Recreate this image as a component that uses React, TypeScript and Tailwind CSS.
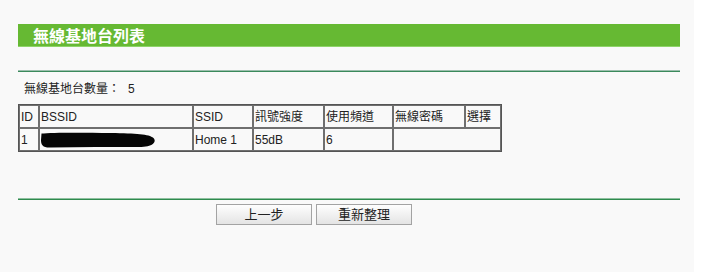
import React from "react";

const font = { fontFamily: '"Liberation Sans", Arial, "Noto Sans CJK TC", sans-serif' };

function Blob() {
  return (
    <svg width="116" height="16" viewBox="0 0 116 16" className="block">
      <path
        d="M0.5 1.5 C 10 0.5, 40 0.5, 70 1 C 95 1.5, 108 2, 112.5 6 C 116 10, 112 15, 98 15 C 70 15, 40 14.5, 10 15.5 C 2 16, 0 13, 0 8 Z"
        fill="#050505"
      />
    </svg>
  );
}

export default function App() {
  const th = "border border-[#6f6f6f] text-left font-normal pl-[1px] h-[23px] align-middle";
  const td = "border border-[#6f6f6f] pl-[1px] h-[23px] align-middle";
  return (
    <div className="w-[720px] h-[272px] bg-white" style={font}>
      <div className="w-[694px] h-[272px] bg-[#f9f9f9] pl-[18px] pr-[14px] pt-[24px] text-[12px] text-[#222]">
        <div className="h-[23px] bg-[#66b933] border-b border-[#8ed46a] flex items-center pl-[15px]">
          <span className="text-white font-bold text-[16px] leading-none" style={{ fontFamily: '"Noto Sans CJK TC", serif' }}>
            無線基地台列表
          </span>
        </div>
        <div className="mt-[23px] h-[1px] bg-[#9dbfae]" />
        <div className="h-[1px] bg-[#3b8a5c]" />
        <div className="mt-[9px] pl-[6px] leading-[16px] flex">
          <span>無線基地台數量：</span>
          <span className="ml-[8px]">5</span>
        </div>
        <table className="mt-[7px] border-separate border-spacing-0 border border-[#555] table-fixed w-[484px] leading-[14px]">
          <colgroup>
            <col className="w-[20px]" />
            <col className="w-[154px]" />
            <col className="w-[60px]" />
            <col className="w-[71px]" />
            <col className="w-[69px]" />
            <col className="w-[72px]" />
            <col className="w-[36px]" />
          </colgroup>
          <thead>
            <tr>
              <th className={th}>ID</th>
              <th className={th}>BSSID</th>
              <th className={th}>SSID</th>
              <th className={th}>訊號強度</th>
              <th className={th}>使用頻道</th>
              <th className={th}>無線密碼</th>
              <th className={th}>選擇</th>
            </tr>
          </thead>
          <tbody>
            <tr>
              <td className={td}>1</td>
              <td className={td}>
                <Blob />
              </td>
              <td className={td}>Home 1</td>
              <td className={td}>55dB</td>
              <td className={td}>6</td>
              <td className={td} colSpan={2}></td>
            </tr>
          </tbody>
        </table>
        <div className="mt-[46px] h-[1px] bg-[#8fc0a0]" />
        <div className="h-[1px] bg-[#2e8b4e]" />
        <div className="mt-[4px] pl-[198px] flex gap-[4px]">
          <button className="w-[96px] h-[21px] border border-[#a3a3a3] bg-gradient-to-b from-[#fefefe] to-[#e4e4e4] text-[13px] text-[#222] leading-none">
            上一步
          </button>
          <button className="w-[96px] h-[21px] border border-[#a3a3a3] bg-gradient-to-b from-[#fefefe] to-[#e4e4e4] text-[13px] text-[#222] leading-none">
            重新整理
          </button>
        </div>
      </div>
    </div>
  );
}
